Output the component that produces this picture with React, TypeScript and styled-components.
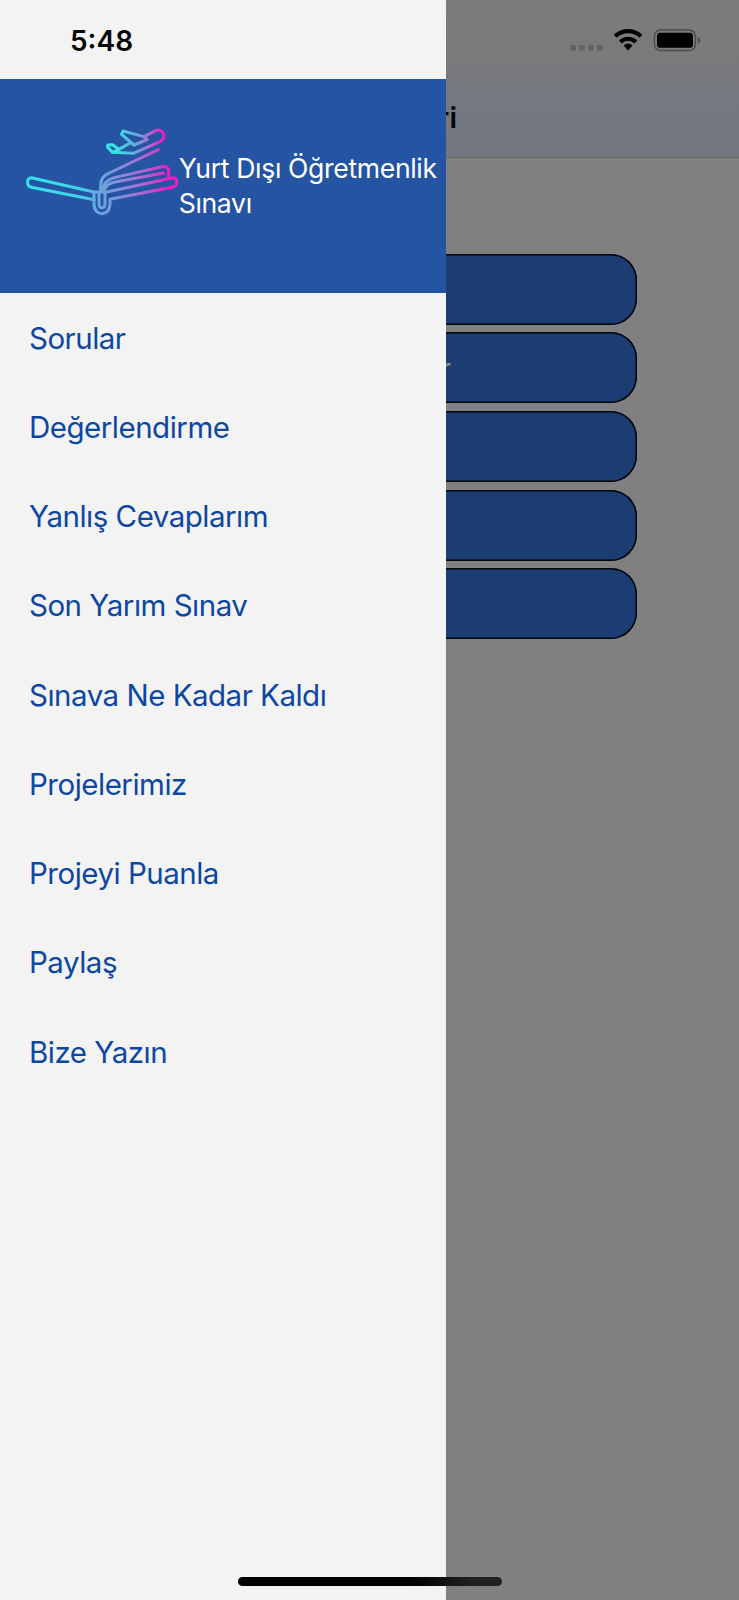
import React from "react";
import styled, { createGlobalStyle } from "styled-components";

const GlobalStyle = createGlobalStyle`
  * { box-sizing: border-box; }
  body { margin: 0; background: #808080; }
`;

const Screen = styled.div`
  position: relative;
  width: 739px;
  height: 1600px;
  overflow: hidden;
  background: #808080;
  font-family: Inter, "Liberation Sans", sans-serif;
`;

const NavBar = styled.header`
  display: flex;
  justify-content: flex-end;
  align-items: flex-end;
  height: 158px;
  padding: 0 282px 21px 0;
  border-bottom: 1px solid #67686d;
  background: linear-gradient(#7c7c7b 0%, #7a7a7d 42%, #747881 65%, #72767f 100%);
`;

const NavTitle = styled.h1`
  margin: 0;
  color: #050505;
  font-size: 29px;
  line-height: 36px;
  font-weight: 600;
`;

const Choices = styled.main`
  display: flex;
  flex-direction: column;
  gap: 7.6px;
  padding: 95.75px 102px 0;
`;

const Choice = styled.button`
  display: flex;
  align-items: center;
  justify-content: flex-end;
  height: 71px;
  padding: 2px 186px 0 0;
  border: 0;
  border-radius: 26px;
  box-shadow: inset 0 0 0 1.5px #030508;
  background: #1c3c74;
  color: #8e9189;
  font: 400 28px Inter, sans-serif;
`;

const Drawer = styled.aside`
  position: absolute;
  inset: 0 auto 0 0;
  width: 446.3px;
  padding-top: 79px;
  background: #f3f3f3;
`;

const DrawerHeader = styled.div`
  display: flex;
  align-items: flex-start;
  height: 214px;
  padding: 48px 0 0 26.2px;
  background: #2554a2;
`;

const Title = styled.div`
  margin: 23.5px 0 0 -0.8px;
  color: #fff;
  font-size: 26.6px;
  line-height: 35.7px;
  letter-spacing: -0.35px;
  white-space: nowrap;
`;

const Menu = styled.nav`
  display: flex;
  flex-direction: column;
`;

const MenuItem = styled.a`
  display: flex;
  align-items: center;
  height: 89.25px;
  padding-left: 29px;
  color: #0d47a1;
  font-size: 29.5px;
  font-weight: 400;
  letter-spacing: -0.5px;
  white-space: nowrap;
`;

const StatusBar = styled.div`
  position: absolute;
  inset: 0 0 auto 0;
  display: flex;
  justify-content: space-between;
  align-items: center;
  height: 80px;
  padding: 0 38.3px 0 70px;
`;

const Clock = styled.span`
  margin-top: 2px;
  color: #080808;
  font-size: 28px;
  font-weight: 600;
`;

const StatusIcons = styled.svg`
  display: block;
`;

const HomeIndicator = styled.div`
  position: absolute;
  left: 237.5px;
  bottom: 14.5px;
  width: 264px;
  height: 8.7px;
  border-radius: 5px;
  background: linear-gradient(90deg, #000 65%, #202020 88%);
`;

const items = [
  "Sorular",
  "Değerlendirme",
  "Yanlış Cevaplarım",
  "Son Yarım Sınav",
  "Sınava Ne Kadar Kaldı",
  "Projelerimiz",
  "Projeyi Puanla",
  "Paylaş",
  "Bize Yazın",
];

const choices = ["", "r", "", "", ""];

function Logo() {
  return (
    <svg width="153.3" height="90" viewBox="80 50 460 270" fill="none" strokeWidth="9" strokeLinejoin="round" strokeLinecap="round">
      <defs>
        <linearGradient id="book" gradientUnits="userSpaceOnUse" x1="80" y1="0" x2="536" y2="0">
          <stop offset="0" stopColor="#35e4e8" />
          <stop offset="0.36" stopColor="#40d4e8" />
          <stop offset="0.47" stopColor="#64a8dc" />
          <stop offset="0.6" stopColor="#8192dc" />
          <stop offset="0.8" stopColor="#b45fd0" />
          <stop offset="0.93" stopColor="#f01cc0" />
        </linearGradient>
        <linearGradient id="plane" gradientUnits="userSpaceOnUse" x1="322" y1="0" x2="498" y2="0">
          <stop offset="0.15" stopColor="#35e4e8" />
          <stop offset="0.5" stopColor="#62abdc" />
          <stop offset="0.7" stopColor="#a673d4" />
          <stop offset="0.95" stopColor="#f01cc0" />
        </linearGradient>
      </defs>
      <g stroke="url(#plane)">
        <path d="M402 129 L482 94 C503 83 493 54 471 60 L434 79 L371 62 L367 72 L404 104 M392 98 L359 117 L340 103 L325 104 L325 111 L340 126 L402 129" />
        <path d="M404 104 L444 88 L434 79 M359 117 L340 126" />
      </g>
      <g stroke="url(#book)">
        <path d="M285 268 L96 231 C81 228 81 202 96 202 L284 245 L322 245" />
        <path d="M284 246 L284 280 C284 320 332 320 332 280 L332 267 L522 230 C536 227 536 201 522 202 L326 244" />
        <path d="M299 248 L299 280 C299 296 317 296 317 280 L317 248" />
        <path d="M304 244 L304 225 C304 204 315 194 330 188 L477 118" />
        <path d="M309 244 C309 218 324 207 348 201 L488 169 C503 166 508 174 508 184 L508 204" />
        <path d="M314 244 C316 225 332 217 351 214 L493 188" />
      </g>
    </svg>
  );
}

export default function App() {
  return (
    <>
      <GlobalStyle />
      <Screen>
        <NavBar>
          <NavTitle>ri</NavTitle>
        </NavBar>
        <Choices>
          {choices.map((label, i) => (
            <Choice key={i}>{label}</Choice>
          ))}
        </Choices>
        <Drawer>
          <DrawerHeader>
            <Logo />
            <Title>
              Yurt Dışı Öğretmenlik
              <br />
              Sınavı
            </Title>
          </DrawerHeader>
          <Menu>
            {items.map((item) => (
              <MenuItem key={item}>{item}</MenuItem>
            ))}
          </Menu>
        </Drawer>
        <StatusBar>
          <Clock>5:48</Clock>
          <StatusIcons width="131" height="24" viewBox="0 0 131 24">
            <g fill="#636366">
              <rect x="0.2" y="16.7" width="5.8" height="6" rx="1.8" />
              <rect x="9.1" y="16.7" width="5.8" height="6" rx="1.8" />
              <rect x="18" y="16.7" width="5.8" height="6" rx="1.8" />
              <rect x="26.9" y="16.7" width="5.8" height="6" rx="1.8" />
            </g>
            <g fill="none" stroke="#030303" strokeWidth="4.2">
              <path d="M45.2 8.3 A18.5 18.5 0 0 1 71 8.3" />
              <path d="M50.4 13.9 A11 11 0 0 1 65.8 13.9" />
            </g>
            <path d="M53.6 17.4 Q58.1 13.8 62.6 17.4 L58.1 22.6 Z" fill="#030303" />
            <rect x="84.4" y="2" width="41" height="20.5" rx="6.2" fill="none" stroke="#4c4c4f" strokeWidth="1.5" />
            <rect x="87" y="4.8" width="36" height="15" rx="3.4" fill="#000" />
            <path d="M128 8.7 Q130.2 9.8 130.2 12.2 Q130.2 14.8 128 16 Z" fill="#4c4c4f" />
          </StatusIcons>
        </StatusBar>
        <HomeIndicator />
      </Screen>
    </>
  );
}
